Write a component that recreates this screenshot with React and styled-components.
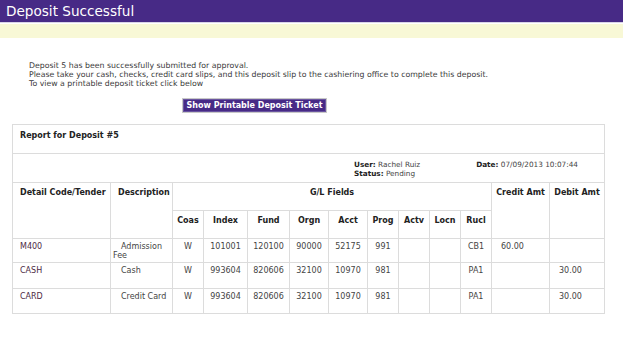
import React from 'react'
import styled, { createGlobalStyle } from 'styled-components'

const GlobalStyle = createGlobalStyle`
  body{
    margin:0;
    background:#fff;
    font-family:"DejaVu Sans", Verdana, sans-serif;
    color:#333;
  }
`

const rows = [
  { code: 'M400', desc: 'Admission Fee', coas: 'W', index: '101001', fund: '120100', orgn: '90000', acct: '52175', prog: '991', rucl: 'CB1', credit: '60.00', debit: '', h: 24 },
  { code: 'CASH', desc: 'Cash', coas: 'W', index: '993604', fund: '820606', orgn: '32100', acct: '10970', prog: '981', rucl: 'PA1', credit: '', debit: '30.00', h: 26 },
  { code: 'CARD', desc: 'Credit Card', coas: 'W', index: '993604', fund: '820606', orgn: '32100', acct: '10970', prog: '981', rucl: 'PA1', credit: '', debit: '30.00', h: 25 },
]

const widths = [98, 62, 31, 44, 42, 39, 39, 31, 31, 31, 31, 58, 55]

export default function App(){
  return(
    <Page>
      <GlobalStyle />
      <TitleBar>Deposit Successful</TitleBar>
      <Notice />
      <Message>
        <p>Deposit 5 has been successfully submitted for approval.</p>
        <p>Please take your cash, checks, credit card slips, and this deposit slip to the cashiering office to complete this deposit.</p>
        <p>To view a printable deposit ticket click below</p>
      </Message>
      <ButtonRow>
        <PrintButton>Show Printable Deposit Ticket</PrintButton>
      </ButtonRow>

      <Report>
        <colgroup>
          {widths.map((w,i)=><col key={i} style={{width:w}} />)}
        </colgroup>
        <tbody>
          <Row $h={29}>
            <Cell colSpan={13} $pad={6} $left={7}><b>Report for Deposit #5</b></Cell>
          </Row>
          <Row $h={29}>
            <Cell colSpan={13} $pad={6}>
              <Meta>
                <div>
                  <div><b>User:</b> Rachel Ruiz</div>
                  <div><b>Status:</b> Pending</div>
                </div>
                <div><b>Date:</b> 07/09/2013 10:07:44</div>
              </Meta>
            </Cell>
          </Row>
          <Row $h={28}>
            <Head rowSpan={2}>Detail Code/Tender</Head>
            <Head rowSpan={2}>Description</Head>
            <Head colSpan={9} $center>G/L Fields</Head>
            <Head rowSpan={2} $center>Credit Amt</Head>
            <Head rowSpan={2} $center>Debit Amt</Head>
          </Row>
          <Row $h={28}>
            {['Coas','Index','Fund','Orgn','Acct','Prog','Actv','Locn','Rucl'].map(h=>(
              <Head key={h} $center>{h}</Head>
            ))}
          </Row>
          {rows.map((r,i)=>(
            <Row key={i} $h={r.h}>
              <Cell $left={7} $code>{r.code}</Cell>
              <Cell $indent>{r.desc}</Cell>
              <Cell $center>{r.coas}</Cell>
              <Cell $center>{r.index}</Cell>
              <Cell $center>{r.fund}</Cell>
              <Cell $center>{r.orgn}</Cell>
              <Cell $center>{r.acct}</Cell>
              <Cell $center>{r.prog}</Cell>
              <Cell $center></Cell>
              <Cell $center></Cell>
              <Cell $center>{r.rucl}</Cell>
              <Cell $left={9}>{r.credit}</Cell>
              <Cell $left={9}>{r.debit}</Cell>
            </Row>
          ))}
        </tbody>
      </Report>
    </Page>
  )
}

const Page=styled.div`
  width:623px;
  min-height:357px;
`

const TitleBar=styled.div`
  height:22px;
  background:#472a86;
  color:#fff;
  font-size:13.6px;
  line-height:22px;
  padding-left:6px;
  border-bottom:1px solid #d9d4e6;
`

const Notice=styled.div`
  height:14px;
  margin-top:1px;
  background:#f8f8d6;
`

const Message=styled.div`
  padding:23px 0 0 29px;
  font-size:7.8px;
  line-height:9px;
  color:#3a3a3a;

  p{
    margin:0;
  }
`

const ButtonRow=styled.div`
  padding:10px 0 0 182px;
  line-height:0;
`

const PrintButton=styled.button`
  height:15px;
  width:145px;
  padding:0;
  background:#472a86;
  color:#fff;
  font-family:"DejaVu Sans", Verdana, sans-serif;
  font-weight:bold;
  font-size:8px;
  line-height:13px;
  border:1px solid #c8c8c8;
  box-shadow:inset 0 0 0 1px #6a55a0;
  cursor:pointer;
`

const Report=styled.table`
  margin:11px 0 0 12px;
  width:592px;
  table-layout:fixed;
  border-collapse:collapse;
  font-size:8px;
  line-height:9px;

  td{
    border:1px solid #dcdcdc;
    vertical-align:top;
  }
`

const Row=styled.tr`
  height:${p=>p.$h}px;
`

const Cell=styled.td`
  padding:${p=>p.$pad ?? 3}px 2px 0 ${p=>p.$left ?? 2}px;
  text-align:${p=>p.$center ? 'center' : 'left'};
  color:${p=>p.$code ? '#4d2a45' : '#444'};
  text-indent:${p=>p.$indent ? '8px' : '0'};

  b{
    color:#222;
  }
`

const Head=styled.td`
  padding:5px 2px 0 ${p=>p.$center ? '2px' : '7px'};
  font-weight:bold;
  color:#222;
  text-align:${p=>p.$center ? 'center' : 'left'};
`

const Meta=styled.div`
  display:flex;
  padding-left:339px;
  gap:56px;
  font-size:7.3px;
`
